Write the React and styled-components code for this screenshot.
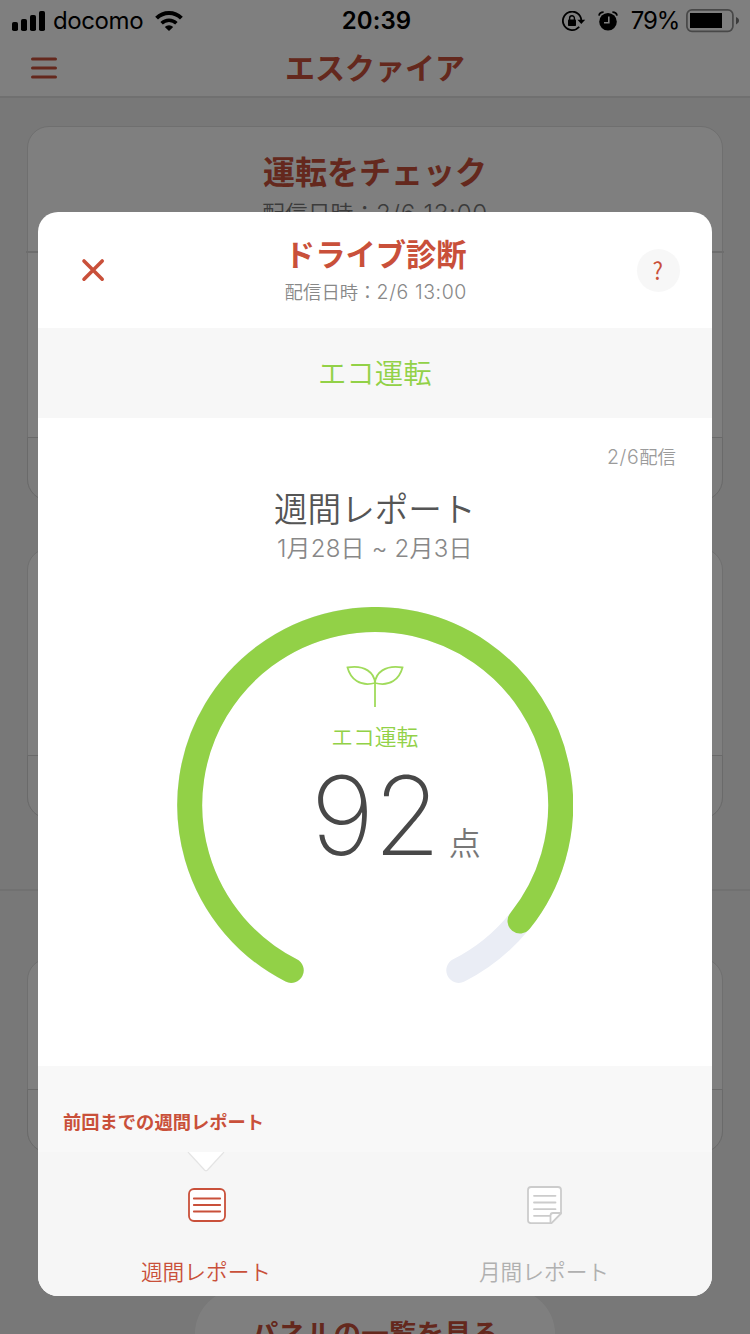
import React from 'react';
import styled, { createGlobalStyle } from 'styled-components';

const GlobalStyle = createGlobalStyle`
  * {
    box-sizing: border-box;
  }
  body {
    margin: 0;
    overflow: hidden;
    font-family: Inter, 'Noto Sans CJK JP', sans-serif;
    -webkit-font-smoothing: antialiased;
  }
  h1, h2, h3, p {
    margin: 0;
  }
  button {
    border: 0;
    padding: 0;
    background: none;
    font-family: inherit;
  }
  svg {
    display: block;
  }
`;

const Screen = styled.div`
  position: relative;
  width: 750px;
  height: 1334px;
  overflow: hidden;
  background: #f0f0f0;
`;
const TopNav = styled.header`
  height: 98px;
  background: #ffffff;
  border-bottom: 2px solid #e0e0e0;
`;
const StatusBar = styled.div`
  display: grid;
  grid-template-columns: 1fr auto 1fr;
  align-items: center;
  height: 40px;
  padding: 0 10px 0 12px;
  color: #000000;
  font-size: 24px;
  line-height: 40px;
`;
const StatusLeft = styled.div`
  display: flex;
  align-items: center;
`;
const Carrier = styled.span`
  margin: 1px 12px 0 8px;
  font-size: 24px;
  letter-spacing: -0.4px;
`;
const Clock = styled.span`
  margin: 1px 0 0 1px;
  font-size: 24px;
  font-weight: 560;
  letter-spacing: 0.1px;
`;
const StatusRight = styled.div`
  display: flex;
  align-items: center;
  justify-content: flex-end;
`;
const StatusIcons = styled.div`
  display: flex;
  gap: 12px;
`;
const Percent = styled.span`
  margin: 1px 7px 0 13px;
  font-size: 24px;
  letter-spacing: -1.2px;
`;
const NavRow = styled.div`
  display: grid;
  grid-template-columns: 1fr auto 1fr;
  align-items: center;
  height: 56px;
  padding: 0 31px;
`;
const NavTitle = styled.h1`
  color: #c9503a;
  font-size: 30px;
  font-weight: 700;
  line-height: 54px;
`;
const Card = styled.section`
  display: flex;
  flex-direction: column;
  justify-content: space-between;
  height: ${(props) => props.$height}px;
  margin: ${(props) => props.$top}px 27px 0;
  background: #fefefe;
  border: 1px solid #dedede;
  border-radius: 22px;
`;
const CardHead = styled.div`
  height: 126px;
  margin: 0 -2px;
  padding-top: 24px;
  border-bottom: 2px solid #dadada;
  text-align: center;
`;
const CardTitle = styled.h2`
  color: #c9503a;
  font-size: 32px;
  font-weight: 700;
  line-height: 44px;
`;
const CardDate = styled.p`
  color: #777777;
  font-size: 22.8px;
  font-weight: 350;
  line-height: 38px;
`;
const Num = styled.span`
  font-size: 1.06em;
  letter-spacing: 0.03em;
`;
const CardFoot = styled.div`
  height: ${(props) => props.$height}px;
  margin: auto -1px -1px;
  background: #f8f8f8;
  border: 1px solid #d4d4d4;
  border-radius: 0 0 22px 22px;
`;
const Divider = styled.hr`
  height: 2px;
  margin: 70px 0 0;
  border: 0;
  background: #e2e2e2;
`;
const PanelButton = styled.button`
  display: block;
  width: 360px;
  height: 90px;
  margin: 136px auto 0;
  border-radius: 45px;
  background: #ffffff;
  color: #c9503a;
  font-size: 27.6px;
  font-weight: 700;
  line-height: 88px;
`;

const Dim = styled.div`
  position: absolute;
  inset: 0;
  padding: 212px 38px 38px 37.5px;
  background: rgba(0, 0, 0, 0.5);
`;
const Modal = styled.div`
  height: 1084px;
  border-radius: 20px;
  overflow: hidden;
  background: #ffffff;
`;
const ModalHeader = styled.div`
  display: grid;
  grid-template-columns: 1fr auto 1fr;
  align-items: center;
  height: 116px;
  padding: 0 32.5px 0 43.3px;
`;
const ModalHeading = styled.div`
  margin: 0 4.4px 0 -4.4px;
  text-align: center;
`;
const ModalTitle = styled.h2`
  color: #c9503a;
  font-size: 30.3px;
  font-weight: 700;
  line-height: 44px;
`;
const ModalDate = styled.p`
  color: #888888;
  font-size: 18.4px;
  font-weight: 350;
  line-height: 30px;
`;
const HelpButton = styled.button`
  justify-self: end;
  width: 43px;
  height: 43px;
  border-radius: 50%;
  background: #f7f7f7;
  color: #c9503a;
  font-family: 'Noto Sans CJK JP', sans-serif;
  font-size: 24px;
  font-weight: 400;
  line-height: 38px;

  span {
    display: inline-block;
    transform: scaleX(0.92);
  }
`;
const Category = styled.div`
  height: 90px;
  padding-top: 2px;
  background: #f7f7f7;
  color: #92d147;
  font-size: 28.4px;
  font-weight: 350;
  line-height: 88px;
  text-align: center;
`;
const Report = styled.div`
  display: flex;
  flex-direction: column;
  align-items: center;
  height: 648px;
  padding-top: 24px;
`;
const Delivered = styled.p`
  align-self: flex-end;
  margin-right: 36px;
  color: #9b9b9b;
  font-size: 18.4px;
  font-weight: 350;
  line-height: 30px;
`;
const ReportTitle = styled.h3`
  margin-top: 14px;
  color: #555555;
  font-size: 33.6px;
  font-weight: 350;
  line-height: 48px;
`;
const Period = styled.p`
  color: #888888;
  font-size: 24px;
  font-weight: 350;
  letter-spacing: 0.2px;
  line-height: 29px;
`;
const Gauge = styled.div`
  display: grid;
  width: 396px;
  height: 396px;
  margin-top: 44px;

  & > * {
    grid-area: 1 / 1;
  }
`;
const GaugeBody = styled.div`
  display: flex;
  flex-direction: column;
  align-items: center;
  padding-top: 57px;
`;
const GaugeLabel = styled.p`
  margin-top: 14px;
  color: #92d147;
  font-size: 21.8px;
  font-weight: 350;
  line-height: 32px;
`;
const Score = styled.div`
  display: flex;
  align-items: baseline;
  margin: 7px 0 0 42px;
`;
const ScoreValue = styled.strong`
  color: #484848;
  font-size: 109px;
  font-weight: 160;
  line-height: 110px;
  letter-spacing: -1px;
`;
const ScoreUnit = styled.span`
  margin-left: 9px;
  color: #777777;
  font-size: 32px;
  font-weight: 350;
  line-height: 40px;
`;
const Previous = styled.div`
  height: 86px;
  padding: 42px 0 0 25.5px;
  background: #f8f8f8;
  color: #c9503a;
  font-size: 18.3px;
  font-weight: 700;
  line-height: 28px;
`;
const Tabs = styled.nav`
  display: grid;
  grid-template-columns: 337px 339px;
  height: 144px;
  background: #f6f6f6;
`;
const Tab = styled.button`
  display: flex;
  flex-direction: column;
  align-items: center;
  color: ${(props) => (props.$active ? '#c9503a' : '#b0b0b0')};
`;
const TabMarker = styled.div`
  height: 22px;
`;
const TabIcon = styled.div`
  display: flex;
  align-items: center;
  height: 62px;
  padding-left: 1px;
`;
const TabLabel = styled.span`
  margin-top: 20px;
  font-size: 21.7px;
  font-weight: 350;
  line-height: 32px;
`;

function SignalIcon() {
  return (
    <svg width="33" height="20" viewBox="0 0 33 20">
      <rect x="0" y="11" width="6" height="9" rx="1.8" />
      <rect x="9" y="8" width="6" height="12" rx="1.8" />
      <rect x="18" y="4" width="6" height="16" rx="1.8" />
      <rect x="27" y="0" width="6" height="20" rx="1.8" />
    </svg>
  );
}

function WifiIcon() {
  return (
    <svg width="28" height="20" viewBox="0 0 28 20">
      <path d="M1.6 7.2A17.6 17.6 0 0 1 26.4 7.2" fill="none" stroke="#000" strokeWidth="4" />
      <path d="M6.6 12.3A10.5 10.5 0 0 1 21.4 12.3" fill="none" stroke="#000" strokeWidth="3.5" />
      <path d="M9.8 15.9A6 6 0 0 1 18.2 15.9L14 20Z" />
    </svg>
  );
}

function LockIcon() {
  return (
    <svg width="24" height="20" viewBox="0 0 24 20">
      <path d="M19.3 9.5A9.2 9.2 0 1 0 17.2 15.7" fill="none" stroke="#000" strokeWidth="1.8" />
      <path d="M15.4 8.8H23.2L19.3 13Z" />
      <rect x="6" y="8.6" width="8" height="6.4" rx="0.8" />
      <path d="M7.6 9V7.2a2.4 2.4 0 0 1 4.8 0V9" fill="none" stroke="#000" strokeWidth="1.4" />
    </svg>
  );
}

function AlarmIcon() {
  return (
    <svg width="20" height="20" viewBox="0 0 20 20">
      <circle cx="10" cy="10.8" r="8.8" />
      <path d="M1 4.6C1.4 2.5 3 1.2 5.6 1.2M14.4 1.2C17 1.2 18.6 2.5 19 4.6" fill="none" stroke="#000" strokeWidth="1.8" />
      <path d="M10.8 5.4V11.8H6" fill="none" stroke="#fff" strokeWidth="1.6" />
    </svg>
  );
}

function BatteryIcon() {
  return (
    <svg width="54" height="24" viewBox="0 0 54 24">
      <rect x="0.9" y="0.9" width="46" height="21.4" rx="5" fill="none" stroke="#909090" strokeWidth="1.7" />
      <rect x="4" y="4" width="32" height="15" />
      <path d="M50 8C52 8.8 53 10 53 11.6S52 14.6 50 15.4Z" fill="#777" />
    </svg>
  );
}

function MenuIcon() {
  return (
    <svg width="26" height="22" viewBox="0 0 26 22" stroke="#c9503a" strokeWidth="3" strokeLinecap="round">
      <path d="M1.5 2H24.5M1.5 11H24.5M1.5 20H24.5" />
    </svg>
  );
}

function CloseIcon() {
  return (
    <svg width="24" height="24" viewBox="0 0 24 24" stroke="#c9503a" strokeWidth="3.6" strokeLinecap="round">
      <path d="M3 3L21.2 21.2M21.2 3L3 21.2" />
    </svg>
  );
}

function GaugeRing() {
  return (
    <svg width="396" height="396" viewBox="0 0 396 396" fill="none" strokeWidth="25" strokeLinecap="round">
      <path d="M114.2 363.4A185.5 185.5 0 1 1 281.8 363.4" stroke="#eaedf5" />
      <path d="M114.2 363.4A185.5 185.5 0 1 1 343 314" stroke="#92d147" />
    </svg>
  );
}

function SproutIcon() {
  return (
    <svg width="58" height="43" viewBox="0 0 58 43" fill="none" stroke="#a0db5b" strokeWidth="1.8">
      <path d="M29 43V19" />
      <path d="M29 19C28.5 9 19 0.5 1.5 3.5C4.5 15 14 23 29 19Z" />
      <path d="M29 19C29.5 9 39 0.5 56.5 3.5C53.5 15 44 23 29 19Z" />
    </svg>
  );
}

function MarkerIcon() {
  return (
    <svg width="38" height="20" viewBox="0 0 38 20">
      <path d="M1 0L17.5 18Q19 19.4 20.5 18L37 0" fill="#fff" stroke="#e4e4e4" strokeWidth="1.2" />
    </svg>
  );
}

function WeeklyIcon() {
  return (
    <svg width="38" height="34" viewBox="0 0 38 34" stroke="#c9503a" strokeWidth="1.8" strokeLinecap="round">
      <rect x="1" y="1" width="36" height="32" rx="5" fill="#fff" />
      <path d="M5.8 10.5H32.2M5.8 17H32.2M5.8 23.5H32.2" />
    </svg>
  );
}

function MonthlyIcon() {
  return (
    <svg width="35" height="38" viewBox="0 0 35 38" stroke="#cccccc" strokeWidth="1.8" strokeLinecap="round" strokeLinejoin="round">
      <path d="M4 1H31Q34 1 34 4V27.5L24.5 37.2H4Q1 37.2 1 34.2V4Q1 1 4 1Z" fill="#fff" />
      <path d="M34 27H26Q23.5 27 23.5 29.5V37.2" fill="none" />
      <path d="M7 9.8H28.5M7 16.5H28.5M7 23.2H28.5M7 29.8H23" />
    </svg>
  );
}

export default function App() {
  return (
    <>
      <GlobalStyle />
      <Screen>
        <TopNav>
          <StatusBar>
            <StatusLeft>
              <SignalIcon />
              <Carrier>docomo</Carrier>
              <WifiIcon />
            </StatusLeft>
            <Clock>20:39</Clock>
            <StatusRight>
              <StatusIcons>
                <LockIcon />
                <AlarmIcon />
              </StatusIcons>
              <Percent>79%</Percent>
              <BatteryIcon />
            </StatusRight>
          </StatusBar>
          <NavRow>
            <MenuIcon />
            <NavTitle>エスクァイア</NavTitle>
          </NavRow>
        </TopNav>
        <Card $height={375} $top={28}>
          <CardHead>
            <CardTitle>運転をチェック</CardTitle>
            <CardDate>
              配信日時：<Num>2/6 13:00</Num>
            </CardDate>
          </CardHead>
          <CardFoot $height={64} />
        </Card>
        <Card $height={271} $top={47}>
          <CardFoot $height={64} />
        </Card>
        <Divider />
        <Card $height={195} $top={67}>
          <CardFoot $height={64} />
        </Card>
        <PanelButton>パネルの一覧を見る</PanelButton>

        <Dim>
          <Modal>
            <ModalHeader>
              <CloseIcon />
              <ModalHeading>
                <ModalTitle>ドライブ診断</ModalTitle>
                <ModalDate>
                  配信日時：<Num>2/6 13:00</Num>
                </ModalDate>
              </ModalHeading>
              <HelpButton>
                <span>?</span>
              </HelpButton>
            </ModalHeader>
            <Category>エコ運転</Category>
            <Report>
              <Delivered>
                <Num>2/6</Num>配信
              </Delivered>
              <ReportTitle>週間レポート</ReportTitle>
              <Period>1月28日 ~ 2月3日</Period>
              <Gauge>
                <GaugeRing />
                <GaugeBody>
                  <SproutIcon />
                  <GaugeLabel>エコ運転</GaugeLabel>
                  <Score>
                    <ScoreValue>92</ScoreValue>
                    <ScoreUnit>点</ScoreUnit>
                  </Score>
                </GaugeBody>
              </Gauge>
            </Report>
            <Previous>前回までの週間レポート</Previous>
            <Tabs>
              <Tab $active>
                <TabMarker>
                  <MarkerIcon />
                </TabMarker>
                <TabIcon>
                  <WeeklyIcon />
                </TabIcon>
                <TabLabel>週間レポート</TabLabel>
              </Tab>
              <Tab>
                <TabMarker />
                <TabIcon>
                  <MonthlyIcon />
                </TabIcon>
                <TabLabel>月間レポート</TabLabel>
              </Tab>
            </Tabs>
          </Modal>
        </Dim>
      </Screen>
    </>
  );
}
